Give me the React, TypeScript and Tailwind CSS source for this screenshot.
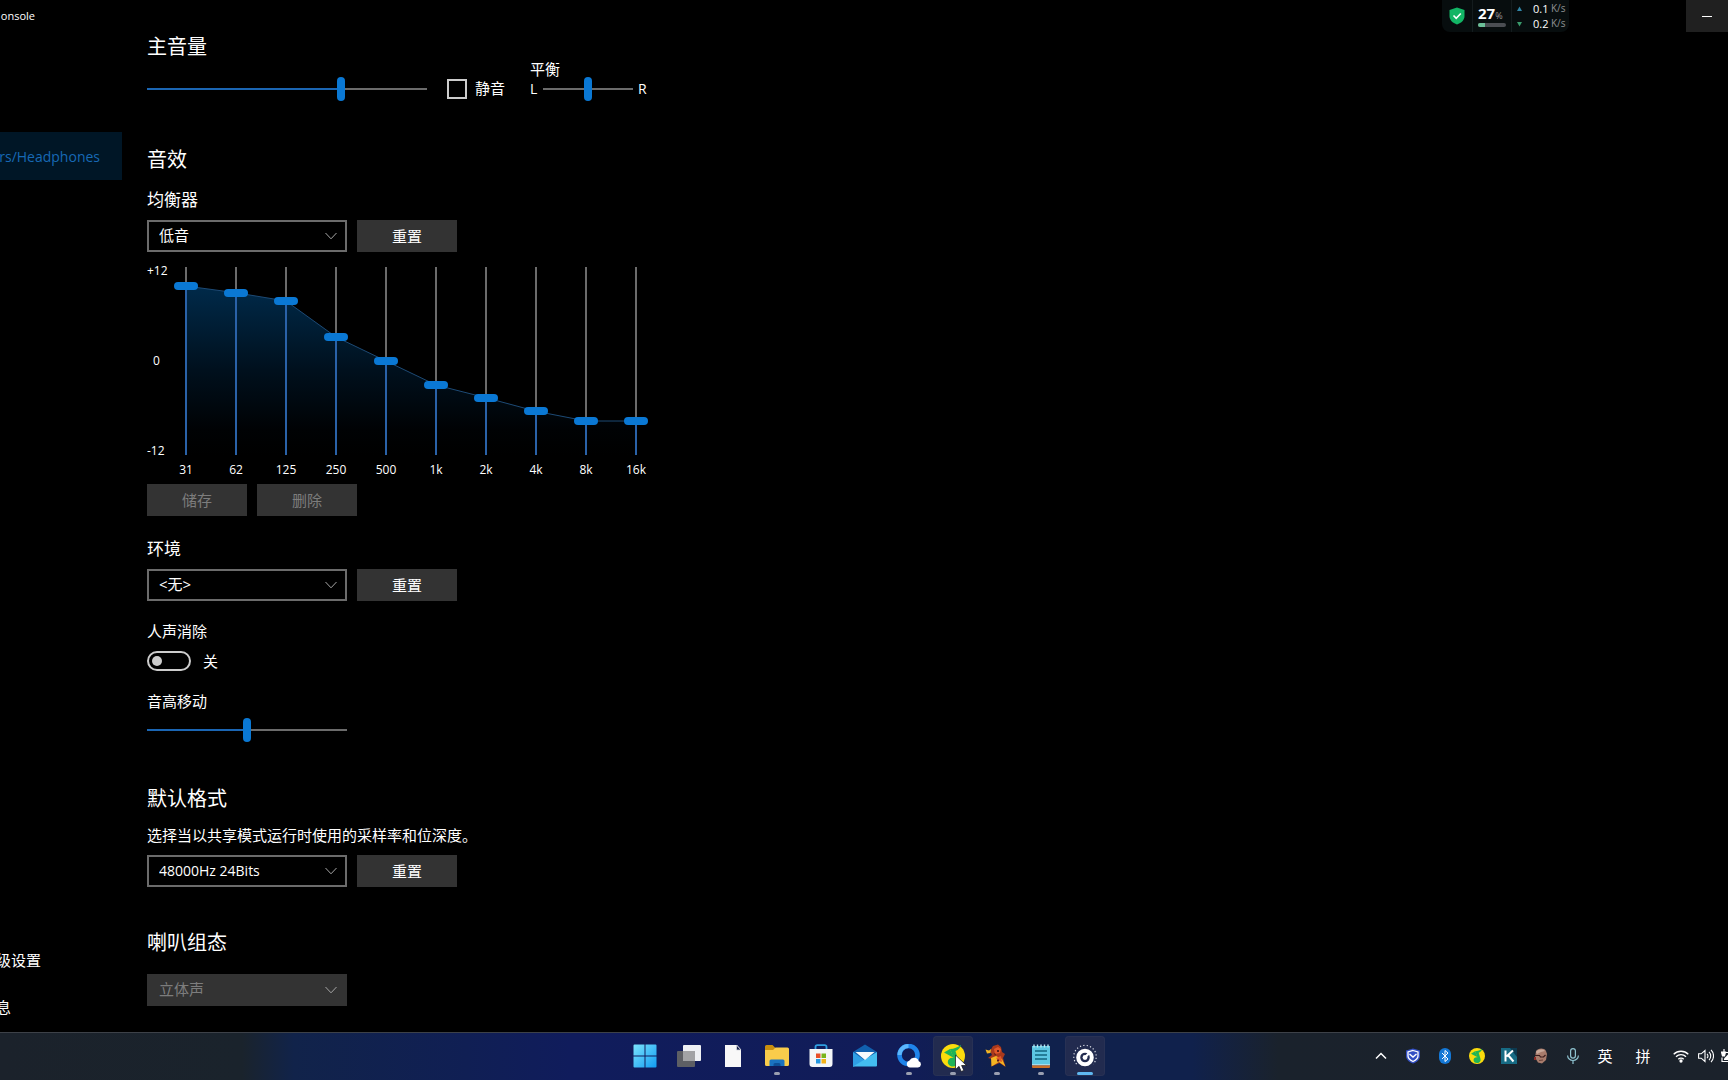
import { useState } from "react";
import type { ReactNode } from "react";
import clsx from "clsx";

const BANDS = [
  { label: "31",  value: 10 },
  { label: "62",  value: 9.1 },
  { label: "125", value: 8 },
  { label: "250", value: 3.2 },
  { label: "500", value: 0 },
  { label: "1k",  value: -3.2 },
  { label: "2k",  value: -4.9 },
  { label: "4k",  value: -6.7 },
  { label: "8k",  value: -8 },
  { label: "16k", value: -8 },
];

// the handle travels 180px inside the 188px track
const bandY = (value: number) => 4 + ((12 - value) / 24) * 180;

function Chevron() {
  return (
    <svg className="pointer-events-none absolute right-2.5 top-3 h-2 w-3" viewBox="0 0 12 8" fill="none" stroke="#a6a6a6">
      <path d="M0.5 1 6 6.8 11.5 1" />
    </svg>
  );
}

function Dropdown({ label, value, latin, disabled }: { label: string; value: string; latin?: boolean; disabled?: boolean }) {
  return (
    <div className="relative h-8 w-[200px]">
      <select
        aria-label={label}
        disabled={disabled}
        className={clsx(
          "h-full w-full appearance-none border-2 pb-0.5 pl-2.5 pr-8",
          latin ? "text-[14px]" : "text-[15px]",
          disabled ? "border-[#333333] bg-[#333333] text-[#7d7d7d] opacity-100" : "border-[#6b6b6b] bg-black text-white",
        )}
      >
        <option>{value}</option>
      </select>
      <Chevron />
    </div>
  );
}

function Button({ children, disabled }: { children: ReactNode; disabled?: boolean }) {
  return (
    <button
      type="button"
      disabled={disabled}
      className={clsx("h-8 w-[100px] bg-[#333333] text-[15px]", disabled ? "text-[#7d7d7d]" : "text-white")}
    >
      {children}
    </button>
  );
}

function Slider({ label, initial, filled, className }: { label: string; initial: number; filled?: boolean; className: string }) {
  const [value, setValue] = useState(initial);
  return (
    <div className={clsx("relative flex h-6 items-center", className)}>
      <div className="h-0.5 w-full bg-[#6b6b6b]">
        {filled && <div className="h-full bg-[#1b66b3]" style={{ width: `${value}%` }} />}
      </div>
      <input
        type="range"
        aria-label={label}
        value={value}
        onChange={(e) => setValue(Number(e.target.value))}
        className="absolute inset-0 h-6 w-full appearance-none bg-transparent [&::-webkit-slider-thumb]:h-6 [&::-webkit-slider-thumb]:w-2 [&::-webkit-slider-thumb]:appearance-none [&::-webkit-slider-thumb]:rounded-full [&::-webkit-slider-thumb]:bg-[#0a78d4]"
      />
    </div>
  );
}

function Equalizer() {
  const [values, setValues] = useState(BANDS.map((b) => b.value));
  const points = values.map((v, i) => `${i * 50},${bandY(v)}`).join(" ");

  return (
    <div className="mt-[15px] flex">
      <div className="flex h-[188px] w-[27px] flex-col justify-between text-[12px] leading-[8px]">
        <span>+12</span>
        <span className="pl-1.5">0</span>
        <span>-12</span>
      </div>
      <div className="relative flex gap-[26px]">
        <svg className="absolute left-3 top-0 h-[188px] w-[450px]" viewBox="0 0 450 188">
          <defs>
            <linearGradient id="eq-fill" x1="0" y1="0" x2="0" y2="1">
              <stop offset="0" stopColor="#002a4a" />
              <stop offset="0.5" stopColor="#00101d" />
              <stop offset="0.85" stopColor="#000204" />
              <stop offset="1" stopColor="#000000" />
            </linearGradient>
          </defs>
          <polygon points={`0,188 ${points} 450,188`} fill="url(#eq-fill)" />
          <polyline points={points} fill="none" stroke="#1d4a75" />
        </svg>
        {BANDS.map((band, i) => (
          <label key={band.label} className="relative flex w-6 flex-col items-center">
            <span className="relative flex h-[188px] w-6 justify-center">
              <span className="flex w-0.5 flex-col justify-end bg-[#6b6b6b]">
                <span className="bg-[#2a62a8]" style={{ height: 188 - bandY(values[i]) }} />
              </span>
              <input
                type="range"
                min={-12}
                max={12}
                step={0.1}
                value={values[i]}
                onChange={(e) => setValues(values.map((v, j) => (j === i ? Number(e.target.value) : v)))}
                className="absolute inset-0 h-full w-6 appearance-none bg-transparent [direction:rtl] [writing-mode:vertical-lr] [&::-webkit-slider-thumb]:h-2 [&::-webkit-slider-thumb]:w-6 [&::-webkit-slider-thumb]:appearance-none [&::-webkit-slider-thumb]:rounded-full [&::-webkit-slider-thumb]:bg-[#0a78d4]"
              />
            </span>
            <span className="mt-[7px] text-[12px] leading-4">{band.label}</span>
          </label>
        ))}
      </div>
    </div>
  );
}

function SectionTitle({ children, className }: { children: ReactNode; className?: string }) {
  return <h2 className={clsx("text-[20px] leading-[30px]", className)}>{children}</h2>;
}

function NetMonitor() {
  return (
    <div className="ml-auto mr-[117px] flex h-8 w-[127px] items-center rounded-b-lg bg-[#070d0e]">
      <svg className="ml-[7px] h-[18px] w-4" viewBox="0 0 16 18">
        <path d="M8 0.500 15.500 3v6c0 4-3 7-7.500 8.500C3.500 16 0.500 13 0.500 9V3z" fill="#12b565" />
        <path d="m4.500 8.500 2.700 2.800 4.600-4.800" fill="none" stroke="#fff" strokeWidth="1.600" />
      </svg>
      <div className="ml-[7px] flex h-full w-10 flex-col justify-center border-x border-[#141c1e] pl-[5px]">
        <div className="flex h-4 items-baseline leading-4">
          <span className="text-[15px] font-bold">27</span>
          <span className="text-[9px] text-[#9a9a9a]">%</span>
        </div>
        <div className="mt-0.5 h-1 w-7 overflow-hidden rounded-full bg-[#4a4d52]">
          <div className="h-full w-1/4 bg-[#6bbf98]" />
        </div>
      </div>
      <div className="flex flex-col pl-[5px] text-[11px] leading-[15px]">
        <div className="flex items-center">
          <svg className="h-1.5 w-[5px]" viewBox="0 0 5 6"><path d="M2.500 0.500 5 5H0z" fill="#3186a8" /></svg>
          <span className="ml-[11px] w-[18px]">0.1</span>
          <span className="text-[10px] text-[#8d9192]">K/s</span>
        </div>
        <div className="flex items-center">
          <svg className="h-1.5 w-[5px]" viewBox="0 0 5 6"><path d="M2.500 5.500 5 1H0z" fill="#3a9a6c" /></svg>
          <span className="ml-[11px] w-[18px]">0.2</span>
          <span className="text-[10px] text-[#8d9192]">K/s</span>
        </div>
      </div>
    </div>
  );
}

function MusicLogo({ className }: { className: string }) {
  return (
    <svg className={className} viewBox="0 0 24 24">
      <circle cx="12" cy="12" r="12" fill="#fbdc0d" />
      <path d="M9 5c4 0 8-1.500 11-4.200-.5 3-2.500 5.200-5.500 6.200l2.700 9c.9 3.600-1.300 6.500-5 6.500-3.200 0-5.400-2-5.400-4.600 0-2.800 2.500-4.600 5.900-4z" fill="#1fb457" />
      <path d="M9 5 3 8.500l10 5.500z" fill="#1fb457" />
    </svg>
  );
}

function TaskButton({ label, active, state, children }: { label: string; active?: boolean; state?: "open" | "focused"; children: ReactNode }) {
  return (
    <button
      type="button"
      aria-label={label}
      className={clsx("relative flex h-10 w-10 items-center justify-center rounded", active && "bg-[#222b4f] ring-1 ring-inset ring-[#283154]")}
    >
      {children}
      {state === "open" && <span className="absolute bottom-px h-[3px] w-1.5 rounded-full bg-[#9a9fb0]" />}
      {state === "focused" && <span className="absolute bottom-px h-[3px] w-4 rounded-full bg-[#5fb8f0]" />}
    </button>
  );
}

function Taskbar() {
  return (
    <footer className="grid h-12 shrink-0 grid-cols-[1fr_auto_1fr] items-start border-t border-[#3d4148] bg-[linear-gradient(90deg,#1b222b_0%,#1a232c_14%,#11234a_17%,#101f54_27%,#101c5c_33%,#111c58_52%,#10214c_58%,#10214c_69%,#1a222c_74%,#1b222b_100%)] pl-0.5 pt-[3px]">
      <span />
      <nav className="flex gap-1">
        <TaskButton label="Start">
          <svg className="h-6 w-6" viewBox="0 0 24 24">
            <defs>
              <linearGradient id="win" x1="0" y1="0" x2="1" y2="1">
                <stop offset="0" stopColor="#7be3fb" />
                <stop offset="1" stopColor="#119cf3" />
              </linearGradient>
            </defs>
            <path d="M1.500 0.500H11.500V11.500H0.500V1.500a1 1 0 0 1 1-1zM12.500 0.500H22.500a1 1 0 0 1 1 1V11.500H12.500zM0.500 12.500H11.500V23.500H1.500a1 1 0 0 1-1-1zM12.500 12.500H23.500V22.500a1 1 0 0 1-1 1H12.500z" fill="url(#win)" />
          </svg>
        </TaskButton>
        <TaskButton label="Task view">
          <svg className="h-6 w-6" viewBox="0 0 24 24">
            <rect x="6" y="1" width="18" height="16" rx="1" fill="#eef0f3" />
            <rect x="0" y="7" width="18" height="16" rx="1" fill="#5d5f64" />
            <path d="M6 7h12v10H6z" fill="#a2a3a5" />
          </svg>
        </TaskButton>
        <TaskButton label="Document">
          <svg className="h-6 w-[18px]" viewBox="0 0 18 24">
            <path d="M1 1h12l4 4.500V23H1z" fill="#f8f8f8" />
            <path d="M12.500 1v5H17z" fill="#1a2350" stroke="#d6d8dd" strokeWidth="0.800" />
          </svg>
        </TaskButton>
        <TaskButton label="File Explorer" state="open">
          <svg className="h-6 w-6" viewBox="0 0 24 24">
            <path d="M0 2.500A1.500 1.500 0 0 1 1.500 1h6L10 3.500V8H0z" fill="#c98f0e" />
            <path d="M0 6h8l2.500-2.500h12A1.500 1.500 0 0 1 24 5v15.500a1.500 1.500 0 0 1-1.500 1.500h-21A1.500 1.500 0 0 1 0 20.500z" fill="#f9cc4b" />
            <path d="M4.500 22v-5A1.500 1.500 0 0 1 6 15.500h12a1.500 1.500 0 0 1 1.500 1.500v5z" fill="#1a73c0" />
            <path d="M8.500 22v-1.500A1.500 1.500 0 0 1 10 19h4a1.500 1.500 0 0 1 1.500 1.500V22z" fill="#0d4f96" />
          </svg>
        </TaskButton>
        <TaskButton label="Microsoft Store">
          <svg className="h-6 w-6" viewBox="0 0 24 24">
            <path d="M6.500 7V3a1.800 1.800 0 0 1 1.800-1.800h7.400A1.800 1.800 0 0 1 17.500 3v4" fill="none" stroke="#2f9fe0" strokeWidth="1.800" />
            <path d="M0.500 5h23v15a3 3 0 0 1-3 3h-17a3 3 0 0 1-3-3z" fill="#f4f6f8" />
            <path d="M7 9.500h4.500V14H7z" fill="#e8502a" />
            <path d="M12.500 9.500H17V14h-4.500z" fill="#79b51c" />
            <path d="M7 15h4.500v4.500H7z" fill="#2597e0" />
            <path d="M12.500 15H17v4.500h-4.500z" fill="#f5b318" />
          </svg>
        </TaskButton>
        <TaskButton label="Mail">
          <svg className="h-6 w-6" viewBox="0 0 24 24">
            <path d="M0 8 12 0.500 24 8v14H0z" fill="#1160ae" />
            <path d="M0 8l12 8.500L0 23z" fill="#2f9fe4" />
            <path d="M24 8 0 22.500h23a1 1 0 0 0 1-1z" fill="#43bdf0" />
            <path d="M2.500 8h19L12 16z" fill="#f6fafc" />
          </svg>
        </TaskButton>
        <TaskButton label="QQ Browser" state="open">
          <svg className="h-6 w-6" viewBox="0 0 24 24">
            <circle cx="11.500" cy="11" r="9" fill="none" stroke="#1f84ea" strokeWidth="4.600" />
            <path d="M2.500 11a9 9 0 0 1 9-9" fill="none" stroke="#5db7fb" strokeWidth="4" />
            <path d="M13 23.500a3.500 3.500 0 0 1-.5-6.900 5 5 0 0 1 9.300.7 3.200 3.200 0 0 1-.8 6.200z" fill="#fff" />
          </svg>
        </TaskButton>
        <TaskButton label="QQ Music" active state="open">
          <MusicLogo className="h-6 w-6" />
          <svg className="absolute left-[22px] top-[18px] h-[19px] w-3" viewBox="0 0 12 19">
            <path d="M0.500 1v14.500l3.500-3.200 2.200 5.200 2.600-1.100L6.600 11.500h4.900z" fill="#fff" stroke="#111" strokeWidth="0.700" />
          </svg>
        </TaskButton>
        <TaskButton label="Game" state="open">
          <svg className="h-6 w-6" viewBox="0 0 24 24">
            <path d="M5 7l3-5 5-1.500 3 2.500 1 5 3 2-2 4 2.500 9-6-4-8 3.500L7 15l-4-1 4-3z" fill="#a8391c" />
            <path d="M0.500 5.500l3.500 1 2-1.500-.5 4-3.500.5zM6 14l5-2 6 3 3.500 7.500L14 18l-7.500 4.500z" fill="#f4b523" />
            <path d="M9 5l4-2 3 2-1 4-5 1zM11 14l5-2 1 6-3-1z" fill="#e2572a" />
            <path d="M12 6h2v2h-2zM9 9l2 1-1 2zM12 15.500h2v2h-2z" fill="#5a1d18" />
          </svg>
        </TaskButton>
        <TaskButton label="Notepad" state="open">
          <svg className="h-6 w-5" viewBox="0 0 20 24">
            <path d="M1 2h18v19H1z" fill="#5cc6e2" />
            <path d="M3 0.500v3M6.500 0.500v3M10 0.500v3M13.500 0.500v3M17 0.500v3" stroke="#b9e8f4" strokeWidth="1.400" />
            <path d="M4 7h12M4 11h12M4 15h12" stroke="#12657f" strokeWidth="1.500" />
            <path d="M1 20.500h18v1H1z" fill="#e9f3f5" />
            <path d="M1 21.500h18V23a1 1 0 0 1-1 1H2a1 1 0 0 1-1-1z" fill="#c96f28" />
          </svg>
        </TaskButton>
        <TaskButton label="Realtek Audio Console" active state="focused">
          <svg className="h-6 w-6" viewBox="0 0 24 24" fill="none">
            <path d="M3.600 20A11.200 11.200 0 1 1 20.400 20" stroke="#dfe2ea" strokeWidth="1.200" strokeDasharray="1.200 2.200" />
            <circle cx="12" cy="13.500" r="6.800" stroke="#fff" strokeWidth="4" />
            <path d="m12 13.500 5.500-6" stroke="#fff" strokeWidth="2.400" />
            <circle cx="12" cy="13.500" r="2.400" fill="#fff" />
          </svg>
        </TaskButton>
      </nav>
      <Tray />
    </footer>
  );
}

function Tray() {
  return (
    <div className="flex h-10 items-center justify-end overflow-hidden">
      <button type="button" aria-label="Show hidden icons" className="flex w-8 justify-center">
        <svg className="h-2 w-3" viewBox="0 0 12 8" fill="none" stroke="#fff" strokeWidth="1.500"><path d="M1 6.500 6 1.500l5 5" /></svg>
      </button>
      <span className="flex w-8 justify-center">
        <svg className="h-4 w-4" viewBox="0 0 16 16">
          <path d="M8 0.500 15 2.500v5.500c0 3.500-3 6-7 7.500-4-1.500-7-4-7-7.500V2.500z" fill="#3450c4" />
          <path d="M8 2.500 13 4v4c0 2.500-2 4-5 5.500C5 12 3 10.500 3 8V4z" fill="none" stroke="#fff" strokeWidth="1.300" />
          <path d="m4.500 6 3.500 3 3.500-3" fill="none" stroke="#fff" strokeWidth="1.500" />
        </svg>
      </span>
      <span className="flex w-8 justify-center">
        <svg className="h-4 w-3" viewBox="0 0 12 16">
          <rect width="12" height="16" rx="6" fill="#1478d6" />
          <path d="m3 5 6 6-3 2.500v-11L9 5l-6 6" fill="none" stroke="#fff" />
        </svg>
      </span>
      <span className="flex w-8 justify-center"><MusicLogo className="h-4 w-4" /></span>
      <span className="flex w-8 justify-center">
        <svg className="h-4 w-4" viewBox="0 0 16 16">
          <path d="M0 0h16v16H0z" fill="#176b84" />
          <path d="M9 0h7v9z" fill="#0c3a50" />
          <path d="M4.500 2.500v11M12 2.500 5.500 8.500M7 7l5.500 6.500" fill="none" stroke="#fff" strokeWidth="2" />
        </svg>
      </span>
      <span className="flex w-8 justify-center">
        <svg className="h-4 w-4" viewBox="0 0 16 16">
          <path d="M3 3c2-3 8-3.500 10 0l1 3-1 6-4 3.500-4-1-3-5z" fill="#a87c6c" />
          <path d="M3 4c2-3 7-3 9-1l-4 1-4 2z" fill="#c9a99a" />
          <path d="M2 7.500h4.500l1 1.500h3l2-2" fill="none" stroke="#3c1d1c" strokeWidth="1.200" />
          <path d="M1 9h2v3H1z" fill="#8e2b25" />
          <path d="M6 12.500l4-.5" stroke="#6b4038" />
        </svg>
      </span>
      <span className="flex w-8 justify-center">
        <svg className="h-4 w-3" viewBox="0 0 12 16" fill="none" stroke="#8fc3d0" strokeWidth="1.200">
          <rect x="3.600" y="0.600" width="4.800" height="9.500" rx="2.400" />
          <path d="M0.600 7.500a5.400 5 0 0 0 10.800 0M6 12.500V16" />
        </svg>
      </span>
      <button type="button" className="w-8 text-[15px] leading-6">英</button>
      <button type="button" className="w-11 text-[15px] leading-6">拼</button>
      <span className="flex w-8 justify-center">
        <svg className="h-3.5 w-4" viewBox="0 0 16 14" fill="none" stroke="#fff" strokeWidth="1.300">
          <path d="M0.700 5.300a10.300 10.300 0 0 1 14.600 0M3 7.800a7 7 0 0 1 10 0M5.300 10.200a3.800 3.800 0 0 1 5.400 0" />
          <circle cx="8" cy="12" r="1" fill="#fff" />
        </svg>
      </span>
      <span className="flex w-[18px] justify-center">
        <svg className="h-3.5 w-4" viewBox="0 0 16 14" fill="none" stroke="#fff" strokeWidth="1.100">
          <path d="M0.600 4.800h2.600L7 1.500v11L3.200 9.200H0.600zM9 4.800a3 3 0 0 1 0 4.400M11 2.800a6 6 0 0 1 0 8.400M13 0.900a8.600 8.600 0 0 1 0 12.200" />
        </svg>
      </span>
      <span className="flex w-[13px] overflow-hidden pl-1.5">
        <svg className="h-3.5 w-5 shrink-0" viewBox="0 0 20 14" fill="none" stroke="#fff" strokeWidth="1.200">
          <path d="M5 3.500h12v9H1V8.500" />
          <path d="M3 0v3M0.500 3h4l-1 4h-2z" fill="#fff" />
          <path d="M3 11V9.500l4-4h8V11z" fill="#fff" stroke="none" />
        </svg>
      </span>
    </div>
  );
}

export default function App() {
  const [muted, setMuted] = useState(false);
  const [vocalOff, setVocalOff] = useState(false);

  return (
    <div className="flex h-screen flex-col overflow-hidden bg-black font-['Open_Sans','Noto_Sans_CJK_SC',sans-serif] text-white">
      <header className="flex h-8 shrink-0 items-center">
        <span className="flex w-[35px] justify-end overflow-hidden text-[11px] leading-4">onsole</span>
        <NetMonitor />
        <button type="button" aria-label="Minimize" className="flex h-8 w-[42px] items-center justify-center bg-[#202020]">
          <span className="h-px w-2.5 bg-white" />
        </button>
      </header>

      <div className="flex min-h-0 flex-1">
        <aside className="flex w-[122px] shrink-0 flex-col pt-[100px] text-[15px]">
          <a href="#headphones" className="flex h-12 items-center justify-end overflow-hidden bg-[#001626] pr-[22px] text-[14px] text-[#1769b5]">
            rs/Headphones
          </a>
          <a href="#advanced" className="mt-auto flex h-12 w-[41px] items-center justify-end overflow-hidden whitespace-nowrap pb-0.5">级设置</a>
          <a href="#info" className="flex h-[47px] w-[11px] items-center justify-end overflow-hidden pb-0.5">息</a>
        </aside>

        <main className="flex-1 pl-[25px]">
          <SectionTitle>主音量</SectionTitle>
          <div className="flex items-end">
            <Slider label="主音量" initial={70} filled className="w-[280px]" />
            <label className="ml-5 flex h-6 items-center gap-2 text-[15px]">
              <input
                type="checkbox"
                checked={muted}
                onChange={(e) => setMuted(e.target.checked)}
                className="h-5 w-5 appearance-none border-2 border-[#cccccc] checked:bg-[#0a78d4]"
              />
              <span className="pb-0.5">静音</span>
            </label>
            <div className="ml-[25px]">
              <p className="text-[15px] leading-[15px]">平衡</p>
              <div className="flex items-center text-[14px] leading-6">
                <span className="w-[13px]">L</span>
                <Slider label="平衡" initial={50} className="w-[90px]" />
                <span className="ml-[5px]">R</span>
              </div>
            </div>
          </div>

          <SectionTitle className="mt-11">音效</SectionTitle>
          <h3 className="mt-[13px] text-[17px] leading-6">均衡器</h3>
          <div className="mt-2 flex gap-2.5">
            <Dropdown label="均衡器" value="低音" />
            <Button>重置</Button>
          </div>
          <Equalizer />
          <div className="mt-1.5 flex gap-2.5">
            <Button disabled>储存</Button>
            <Button disabled>删除</Button>
          </div>

          <h3 className="mt-[21px] text-[17px] leading-6">环境</h3>
          <div className="mt-2 flex gap-2.5">
            <Dropdown label="环境" value="<无>" />
            <Button>重置</Button>
          </div>

          <p className="mt-5 text-[15px] leading-5">人声消除</p>
          <div className="mt-2.5 flex h-5 items-center gap-3 text-[15px]">
            <button
              type="button"
              role="switch"
              aria-label="人声消除"
              aria-checked={vocalOff}
              onClick={() => setVocalOff(!vocalOff)}
              className={clsx("flex h-5 w-11 items-center rounded-full border-2 border-[#cccccc] px-[3px]", vocalOff && "justify-end")}
            >
              <span className="h-2.5 w-2.5 rounded-full bg-[#cccccc]" />
            </button>
            <span>{vocalOff ? "开" : "关"}</span>
          </div>

          <p className="mt-5 text-[15px] leading-5">音高移动</p>
          <Slider label="音高移动" initial={50} filled className="mt-[7px] w-[200px]" />

          <SectionTitle className="mt-[42px]">默认格式</SectionTitle>
          <p className="mt-[11px] text-[15px] leading-5">选择当以共享模式运行时使用的采样率和位深度。</p>
          <div className="mt-2.5 flex gap-2.5">
            <Dropdown label="默认格式" value="48000Hz 24Bits" latin />
            <Button>重置</Button>
          </div>

          <SectionTitle className="mt-[41px]">喇叭组态</SectionTitle>
          <div className="mt-4">
            <Dropdown label="喇叭组态" value="立体声" disabled />
          </div>
        </main>
      </div>

      <Taskbar />
    </div>
  );
}
